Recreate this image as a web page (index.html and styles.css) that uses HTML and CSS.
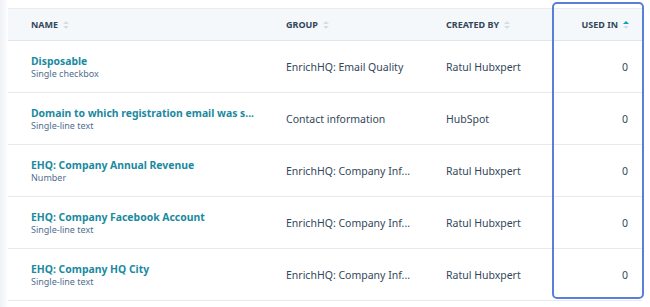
FILE: index.html
```html
<!DOCTYPE html>
<html>
<head>
<meta charset="utf-8">
<link rel="stylesheet" href="styles.css">
</head>
<body>
<div class="page">
  <div class="table">
    <div class="row head">
      <div class="cell c1"><span class="hlabel">NAME</span><span class="sort"><i class="up"></i><i class="down"></i></span></div>
      <div class="cell c2"><span class="hlabel">GROUP</span><span class="sort"><i class="up"></i><i class="down"></i></span></div>
      <div class="cell c3"><span class="hlabel">CREATED BY</span><span class="sort"><i class="up"></i><i class="down"></i></span></div>
      <div class="cell c4"><span class="hlabel">USED IN</span><span class="sort active"><i class="up"></i><i class="down"></i></span></div>
    </div>
    <div class="row">
      <div class="cell c1"><div class="title">Disposable</div><div class="sub">Single checkbox</div></div>
      <div class="cell c2">EnrichHQ: Email Quality</div>
      <div class="cell c3">Ratul Hubxpert</div>
      <div class="cell c4">0</div>
    </div>
    <div class="row">
      <div class="cell c1"><div class="title">Domain to which registration email was s...</div><div class="sub">Single-line text</div></div>
      <div class="cell c2">Contact information</div>
      <div class="cell c3">HubSpot</div>
      <div class="cell c4">0</div>
    </div>
    <div class="row">
      <div class="cell c1"><div class="title">EHQ: Company Annual Revenue</div><div class="sub">Number</div></div>
      <div class="cell c2">EnrichHQ: Company Inf...</div>
      <div class="cell c3">Ratul Hubxpert</div>
      <div class="cell c4">0</div>
    </div>
    <div class="row">
      <div class="cell c1"><div class="title">EHQ: Company Facebook Account</div><div class="sub">Single-line text</div></div>
      <div class="cell c2">EnrichHQ: Company Inf...</div>
      <div class="cell c3">Ratul Hubxpert</div>
      <div class="cell c4">0</div>
    </div>
    <div class="row">
      <div class="cell c1"><div class="title">EHQ: Company HQ City</div><div class="sub">Single-line text</div></div>
      <div class="cell c2">EnrichHQ: Company Inf...</div>
      <div class="cell c3">Ratul Hubxpert</div>
      <div class="cell c4">0</div>
    </div>
    <div class="highlight"></div>
  </div>
</div>
</body>
</html>
```
FILE: styles.css
```css
html, body {
  margin: 0;
  padding: 0;
  background: #ffffff;
}
body {
  font-family: "Noto Sans", "DejaVu Sans", sans-serif;
  color: #33475b;
  width: 650px;
  height: 307px;
  overflow: hidden;
}
.page {
  padding: 8px 8px 0 8px;
  background: linear-gradient(to right, #eef1f5 0px, #f7f9fb 5px, #ffffff 8px);
  height: 299px;
}
.table {
  position: relative;
  background: #ffffff;
  width: 634px;
}
.row {
  display: grid;
  grid-template-columns: 262px 160px 122px 90px;
  height: 51px;
  border-bottom: 1px solid #e6eaf0;
  align-items: center;
}
.row.head {
  height: 31px;
  background: #f5f8fa;
  border-top: 1px solid #e8ecf1;
  border-bottom: 1px solid #e1e6ec;
}
.cell {
  font-size: 10.5px;
  white-space: nowrap;
}
.c1 { padding-left: 23px; }
.c2 { padding-left: 16px; }
.c3 { padding-left: 16px; }
.c4 { text-align: right; padding-right: 14px; }
.head .cell {
  display: flex;
  align-items: center;
  gap: 5px;
}
.head .c4 { justify-content: flex-end; padding-right: 13px; }
.hlabel {
  font-size: 9px;
  font-weight: 700;
  color: #33475b;
}
.sort {
  display: flex;
  flex-direction: column;
  gap: 2px;
}
.sort i {
  display: block;
  width: 0;
  height: 0;
  border-left: 3px solid transparent;
  border-right: 3px solid transparent;
}
.sort .up { border-bottom: 3px solid #d3dde7; }
.sort .down { border-top: 3px solid #d3dde7; }
.sort.active .up { border-bottom-color: #00a4bd; }
.title {
  font-size: 10.4px;
  font-weight: 700;
  color: #1a8a9f;
  line-height: 14px;
}
.sub {
  font-size: 9px;
  color: #516f90;
  line-height: 12px;
}
.highlight {
  position: absolute;
  left: 544px;
  top: -6px;
  width: 88px;
  height: 293px;
  border: 2px solid #5a7fd8;
  border-radius: 5px;
  pointer-events: none;
}
```
